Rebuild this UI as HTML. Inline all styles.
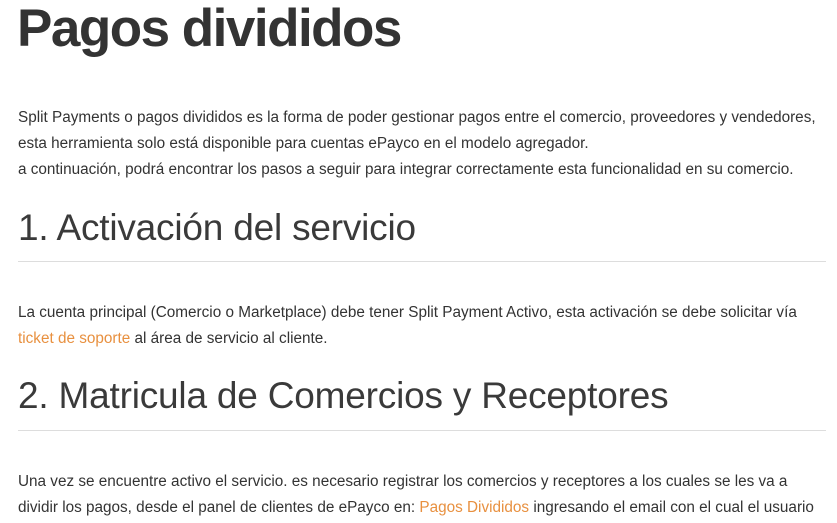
<!DOCTYPE html>
<html><head><meta charset="utf-8"><style>
body{margin:0;background:#fff;width:837px;height:523px;overflow:hidden;font-family:"Liberation Sans",sans-serif;color:#333}
h1{position:absolute;left:17px;top:-2px;margin:0;font-size:53px;font-weight:bold;color:#333;letter-spacing:-1.5px}
.h{position:absolute;left:18px;margin:0;font-size:37px;font-weight:300;color:#3a3a3a;white-space:nowrap;letter-spacing:-0.2px}
.p{position:absolute;left:18px;font-size:15.3px;line-height:26px;white-space:nowrap;color:#333}
.hr{position:absolute;left:18px;width:808px;height:1px;background:#ddd}
a{color:#e8903f;text-decoration:none}
</style></head><body>
<h1>Pagos divididos</h1>
<div class="p" style="top:105px">Split Payments o pagos divididos es la forma de poder gestionar pagos entre el comercio, proveedores y vendedores,<br>esta herramienta solo está disponible para cuentas ePayco en el modelo agregador.<br>a continuación, podrá encontrar los pasos a seguir para integrar correctamente esta funcionalidad en su comercio.</div>
<div class="h" style="top:207px">1. Activación del servicio</div>
<div class="hr" style="top:261px"></div>
<div class="p" style="top:300px">La cuenta principal (Comercio o Marketplace) debe tener Split Payment Activo, esta activación se debe solicitar vía<br><a>ticket de soporte</a> al área de servicio al cliente.</div>
<div class="h" style="top:375px">2. Matricula de Comercios y Receptores</div>
<div class="hr" style="top:430px"></div>
<div class="p" style="top:469px">Una vez se encuentre activo el servicio. es necesario registrar los comercios y receptores a los cuales se les va a<br>dividir los pagos, desde el panel de clientes de ePayco en: <a>Pagos Divididos</a> ingresando el email con el cual el usuario</div>
</body></html>
